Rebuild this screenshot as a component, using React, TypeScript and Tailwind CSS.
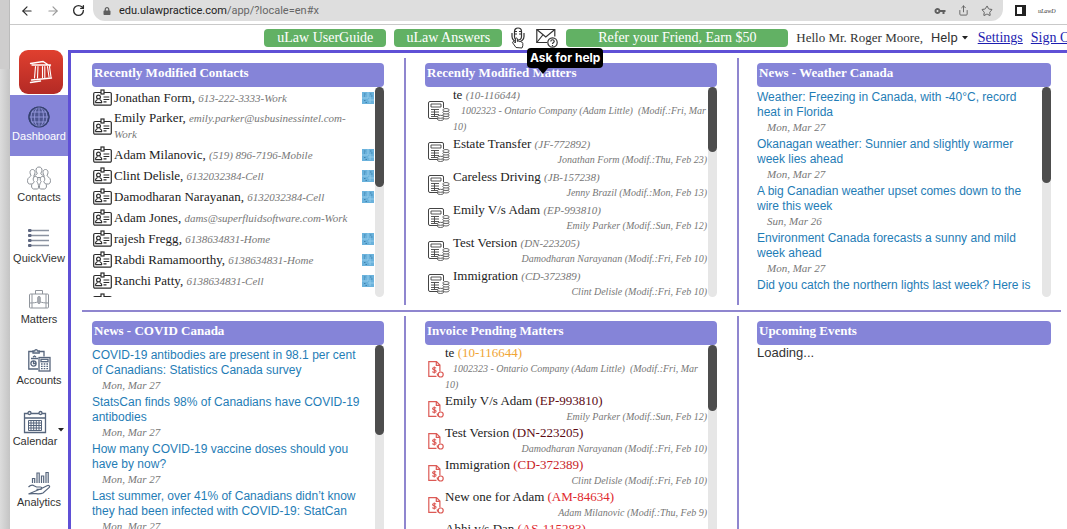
import type { ReactNode } from "react";
import clsx from "clsx";
import { ArrowLeft, ArrowRight, RotateCw, Star, Share } from "lucide-react";
import { FaLock } from "react-icons/fa";
import { MdVpnKey } from "react-icons/md";

const serif = "font-['Liberation_Serif',serif]";

type Contact = { name: string; detail: string; company?: boolean };

const contacts: Contact[] = [
  { name: "Jonathan Form", detail: "613-222-3333-Work", company: true },
  { name: "Emily Parker", detail: "emily.parker@usbusinessintel.com-Work" },
  { name: "Adam Milanovic", detail: "(519) 896-7196-Mobile", company: true },
  { name: "Clint Delisle", detail: "6132032384-Cell", company: true },
  { name: "Damodharan Narayanan", detail: "6132032384-Cell", company: true },
  { name: "Adam Jones", detail: "dams@superfluidsoftware.com-Work" },
  { name: "rajesh Fregg", detail: "6138634831-Home", company: true },
  { name: "Rabdi Ramamoorthy", detail: "6138634831-Home", company: true },
  { name: "Ranchi Patty", detail: "6138634831-Cell", company: true },
];

type Matter = { name: string; code: string; detail: string; long?: boolean; color?: string };

const matters: Matter[] = [
  { name: "te", code: "(10-116644)", detail: "1002323 - Ontario Company (Adam Little) \u00a0(Modif.:Fri, Mar 10)", long: true },
  { name: "Estate Transfer", code: "(JF-772892)", detail: "Jonathan Form (Modif.:Thu, Feb 23)" },
  { name: "Careless Driving", code: "(JB-157238)", detail: "Jenny Brazil (Modif.:Mon, Feb 13)" },
  { name: "Emily V/s Adam", code: "(EP-993810)", detail: "Emily Parker (Modif.:Sun, Feb 12)" },
  { name: "Test Version", code: "(DN-223205)", detail: "Damodharan Narayanan (Modif.:Fri, Feb 10)" },
  { name: "Immigration", code: "(CD-372389)", detail: "Clint Delisle (Modif.:Fri, Feb 10)" },
];

const invoices: Matter[] = [
  { name: "te", code: "(10-116644)", detail: "1002323 - Ontario Company (Adam Little) \u00a0(Modif.:Fri, Mar 10)", long: true, color: "text-[#f0a534]" },
  { name: "Emily V/s Adam", code: "(EP-993810)", detail: "Emily Parker (Modif.:Sun, Feb 12)", color: "text-[#5c0a14]" },
  { name: "Test Version", code: "(DN-223205)", detail: "Damodharan Narayanan (Modif.:Fri, Feb 10)", color: "text-[#5c0a14]" },
  { name: "Immigration", code: "(CD-372389)", detail: "Clint Delisle (Modif.:Fri, Feb 10)", color: "text-[#c81e28]" },
  { name: "New one for Adam", code: "(AM-84634)", detail: "Adam Milanovic (Modif.:Thu, Feb 9)", color: "text-[#e0282e]" },
  { name: "Abhi v/s Dan", code: "(AS-115283)", detail: "Abhi Singh (Modif.:Thu, Feb 9)", color: "text-[#e0282e]" },
];

type News = { title: string; date?: string };

const weatherNews: News[] = [
  { title: "Weather: Freezing in Canada, with -40°C, record heat in Florida", date: "Mon, Mar 27" },
  { title: "Okanagan weather: Sunnier and slightly warmer week lies ahead", date: "Mon, Mar 27" },
  { title: "A big Canadian weather upset comes down to the wire this week", date: "Sun, Mar 26" },
  { title: "Environment Canada forecasts a sunny and mild week ahead", date: "Mon, Mar 27" },
  { title: "Did you catch the northern lights last week? Here is" },
];

const covidNews: News[] = [
  { title: "COVID-19 antibodies are present in 98.1 per cent of Canadians: Statistics Canada survey", date: "Mon, Mar 27" },
  { title: "StatsCan finds 98% of Canadians have COVID-19 antibodies", date: "Mon, Mar 27" },
  { title: "How many COVID-19 vaccine doses should you have by now?", date: "Mon, Mar 27" },
  { title: "Last summer, over 41% of Canadians didn’t know they had been infected with COVID-19: StatCan", date: "Mon, Mar 27" },
];

const GlobeIcon = () => (
  <svg viewBox="0 0 24 24" className="w-6 h-6" fill="none" stroke="#34406f" strokeWidth="1.2">
    <circle cx="12" cy="12" r="10" fill="#4d5590" />
    <g stroke="#8f93d6" strokeWidth="1">
      <path d="M12 2v20M2 12h20M3.6 7h16.8M3.6 17h16.8" />
      <ellipse cx="12" cy="12" rx="4.5" ry="10" />
      <ellipse cx="12" cy="12" rx="8" ry="10" />
    </g>
    <circle cx="12" cy="12" r="10" />
  </svg>
);

const PeopleIcon = () => (
  <svg viewBox="0 0 24 24" className="w-6 h-6" fill="#fff" stroke="#8a8f96" strokeWidth="1">
    <path d="M12 1c-2 0-3 1.400-3 3.200 0 1.300.6 2.300 1.300 3 .2 1.600-3.300 1.500-3.300 4.300h10c0-2.800-3.500-2.700-3.300-4.300.7-.7 1.300-1.700 1.300-3C15 2.400 14 1 12 1z" />
    <path d="M5.500 3.500C3.800 3.500 3 4.800 3 6.400c0 1.300.4 2.200 1 2.800.1 1.700-3.500 2-3.500 5.300 0 2 .8 3.500 2 3.500h6.500c1-2.500-1-4-1.500-5.500-.5-1-.6-2-.5-3.300.6-.6 1-1.500 1-2.800 0-1.600-.8-2.900-2.500-2.900z" />
    <path d="M18.500 3.500c1.700 0 2.500 1.300 2.500 2.900 0 1.300-.4 2.200-1 2.800-.1 1.700 3.500 2 3.500 5.300 0 2-.8 3.500-2 3.500H15c-1-2.500 1-4 1.500-5.500.5-1 .6-2 .5-3.300-.6-.6-1-1.500-1-2.800 0-1.600.8-2.900 2.500-2.900z" />
    <path d="M8.500 10.500c-1.500 0-2.300 1.100-2.300 2.600 0 1.200.4 2 1 2.600.1 1.500-2.700 1.300-2.700 4.300 0 1.500 1 3 2 3h4c1.500 0 1.500-5-.7-7.300.6-.6 1-1.400 1-2.600 0-1.500-.8-2.600-2.300-2.600z" />
    <path d="M15.500 10.500c1.500 0 2.300 1.100 2.300 2.600 0 1.200-.4 2-1 2.600-.1 1.500 2.700 1.300 2.700 4.300 0 1.500-1 3-2 3h-4c-1.500 0-1.500-5 .7-7.300-.6-.6-1-1.400-1-2.600 0-1.500.8-2.600 2.300-2.600z" />
  </svg>
);

const ListIcon = () => (
  <svg viewBox="0 0 24 24" className="w-6 h-6" stroke="#8a92a0" strokeWidth="1.300">
    <path d="M3 3.500h19M3 8.500h19M3 13.500h19M3 18.500h19" />
    <g fill="#5d6680" stroke="none">
      <rect x="1" y="2" width="3.500" height="3" rx="1" />
      <rect x="1" y="7" width="3.500" height="3" rx="1" />
      <rect x="1" y="12" width="3.500" height="3" rx="1" />
      <rect x="1" y="17" width="3.500" height="3" rx="1" />
    </g>
  </svg>
);

const BriefcaseIcon = () => (
  <svg viewBox="0 0 24 24" className="w-6 h-6" fill="none" stroke="#90959c" strokeWidth="1">
    <rect x="2.500" y="6" width="19" height="14" rx="1" />
    <path d="M8.500 6V2.500h7V6M2.500 15c4 0 7-.5 8-1M21.500 15c-4 0-7-.5-8-1M5 6v14M19 6v14" />
    <rect x="10.800" y="8.500" width="2.400" height="7" rx="1" fill="#aeb2b8" />
  </svg>
);

const AccountsIcon = () => (
  <svg viewBox="0 0 24 24" className="w-6 h-6" fill="none" stroke="#56657c" strokeWidth="1.300">
    <path d="M11 20H1.800V2.500h4.400M12 2.500h5v5" />
    <path d="M6 4V2h1.800a1.300 1.300 0 0 1 2.600 0h1.800v2z" />
    <circle cx="6.500" cy="14.500" r="2.600" />
    <path d="M6.500 12v2.500H9M4 9.500h7M6 8l1.500-1L9 8" />
    <rect x="12" y="8.500" width="11" height="13.500" fill="#fff" />
    <rect x="14" y="10.300" width="7" height="2.400" />
    <path d="M14 15h1.600M16.700 15h1.600M19.400 15H21M14 17.300h1.600M16.700 17.300h1.600M19.400 17.300H21M14 19.600h1.600M16.700 19.600h1.600M19.400 19.600H21" />
  </svg>
);

const CalendarIcon = () => (
  <svg viewBox="0 0 24 24" className="w-6 h-6" fill="none" stroke="#56657c" strokeWidth="1.300">
    <path d="M5 3.500H1.500V22.500h21V3.500H19M8 3.500h8M1.500 8h21" />
    <circle cx="6.500" cy="3" r="1.500" />
    <circle cx="17.500" cy="3" r="1.500" />
    <path d="M5.500 10.500h13v10h-13zM5.500 13h13M5.500 15.500h13M5.500 18h13M8 10.500v10M10.700 10.500v10M13.300 10.500v10M16 10.500v10" strokeWidth="1" />
  </svg>
);

const AnalyticsIcon = () => (
  <svg viewBox="0 0 24 24" className="w-6 h-6" fill="none" stroke="#56657c" strokeWidth="1.200">
    <path d="M5.500 12V7.500h2.200V12M10 12V2h2.200v10M14.500 12V5h2.200v7M19 12V1.500h2.200V12" />
    <path d="M1.500 16c2-2 4.500-2 6-1l2 1h4c1.800 0 1.800 2.400 0 2.400H9.500M14.500 17.500l5.500-2.700c2-1 3.500.6 2 1.800L16 22c-3 1.500-7 .5-10 .6L1.500 23z" />
  </svg>
);

const ContactCardIcon = () => (
  <svg viewBox="0 0 19 17" className="w-[19px] h-[17px] shrink-0" fill="none" stroke="#2b2b2b" strokeWidth="1.200">
    <path d="M8 3.500H2A1.300 1.300 0 0 0 .7 4.800v10A1.300 1.300 0 0 0 2 16.200h15a1.300 1.300 0 0 0 1.300-1.400v-10A1.300 1.300 0 0 0 17 3.500h-6" />
    <rect x="8" y="1" width="3" height="4" />
    <circle cx="5.500" cy="8" r="1.900" />
    <path d="M2.300 13.500c.3-2 1.600-2.600 2.300-3M9 13.500c-.3-2-1.600-2.600-2.400-3M2.300 13.700h6.700" />
    <path d="M10.500 8h5.800M10.500 10.500h5.800M10.500 12.800h3" />
  </svg>
);

const CompanyIcon = () => (
  <svg viewBox="0 0 12 12" className="w-3 h-3 shrink-0">
    <rect width="12" height="12" fill="#6ab2dc" />
    <path d="M6 0v6M0 6h6M6 8h6M8 5v6" stroke="#93cbea" strokeWidth="1" />
    <path d="M2 2h1.500M8 2h1.500M2 8.500h1.500M2 4h1M9 4h1.500M3.500 10.500h1.500" stroke="#3f82ae" strokeWidth="1" />
  </svg>
);

const MatterIcon = () => (
  <svg viewBox="0 0 22 20" className="w-[22px] h-5 shrink-0" fill="none" stroke="#444" strokeWidth="1">
    <path d="M12 17.500H2A1.500 1.500 0 0 1 .5 16V2A1.500 1.500 0 0 1 2 .5h12A1.500 1.500 0 0 1 15.500 2v5" />
    <path d="M3 3h10v3H3zM3 8.500h8M3 11h8M3 13.500h8M3 15.500h7M6.500 8.500v7" strokeWidth=".9" />
    <g fill="#fff" strokeWidth=".8">
      <ellipse cx="18" cy="16.500" rx="3.200" ry="1.500" />
      <ellipse cx="18" cy="14" rx="3.200" ry="1.500" />
      <ellipse cx="18" cy="11.500" rx="3.200" ry="1.500" />
      <ellipse cx="18" cy="9" rx="3.200" ry="1.500" />
      <ellipse cx="12.500" cy="18" rx="3.200" ry="1.500" />
      <ellipse cx="12.500" cy="15.800" rx="3.200" ry="1.500" />
    </g>
  </svg>
);

const InvoiceIcon = () => (
  <svg viewBox="0 0 16 17" className="w-4 h-[17px] shrink-0" fill="none" stroke="#dc5a55" strokeWidth="1.200">
    <path d="M8.500 15.400H.8V.7h7.700l3.400 3.400v6.400M8.300.7v3.600h3.600" />
    <path d="M8 7.300C7.500 6.200 4.500 6.200 4.600 7.700c0 1.600 3.500.8 3.500 2.500 0 1.500-3.100 1.500-3.700.2M6.300 5.500v7" strokeWidth="1.100" />
    <circle cx="12.700" cy="13.500" r="2.500" />
    <path d="M9 12.500l1.500 3" />
  </svg>
);

const Caret = ({ className }: { className?: string }) => (
  <svg viewBox="0 0 6 4" className={clsx("w-[6px] h-1", className)} fill="#222">
    <path d="M0 0h6L3 3.500z" />
  </svg>
);

const navItems = [
  { label: "Dashboard", icon: GlobeIcon, active: true },
  { label: "Contacts", icon: PeopleIcon },
  { label: "QuickView", icon: ListIcon },
  { label: "Matters", icon: BriefcaseIcon },
  { label: "Accounts", icon: AccountsIcon },
  { label: "Calendar", icon: CalendarIcon, menu: true },
  { label: "Analytics", icon: AnalyticsIcon },
];

const BrowserBar = () => (
  <div className="flex items-start h-[25px] shrink-0 border-b border-[#c9c9c9] bg-white">
    <div className="flex items-center gap-3 h-[21px] pl-2.5 w-[83px] shrink-0 text-[#2d2d2d]">
      <button aria-label="Back"><ArrowLeft size={14} /></button>
      <button aria-label="Forward"><ArrowRight size={14} className="text-[#9a9a9a]" /></button>
      <button aria-label="Reload"><RotateCw size={13} strokeWidth={2.5} /></button>
    </div>
    <div className="flex flex-1 items-center h-[21px] rounded-b-xl bg-[#dedede] px-2.5 text-[#5f5f5f]">
      <FaLock size={8} className="mr-2" />
      <span className="flex-1 pt-px font-[Roboto,sans-serif] text-[11px] text-[#666]">
        <span className="text-[#222]">edu.ulawpractice.com</span>/app/?locale=en#x
      </span>
      <div className="flex items-center gap-3">
        <MdVpnKey size={12} />
        <Share size={11} />
        <Star size={12} />
      </div>
    </div>
    <div className="flex items-center w-16 h-[21px] pl-3 gap-3 shrink-0">
      <svg viewBox="0 0 11 11" className="w-[11px] h-[11px]">
        <path d="M1 1h9v9H1z" fill="#fff" stroke="#222" strokeWidth="2" />
        <path d="M7 1h3v9H7z" fill="#222" />
      </svg>
      <span className="text-[6px] leading-none italic text-[#333] font-['Liberation_Serif',serif]">uLawD</span>
    </div>
  </div>
);

const Header = () => (
  <header className={clsx("flex items-center justify-end h-[25px] shrink-0 whitespace-nowrap overflow-hidden text-[#333]", serif)}>
    <div className="flex items-center shrink-0 -mr-3.5">
      <button className="w-[122px] h-[18px] rounded-sm bg-[#62b164] text-white text-sm leading-[18px] mr-2">uLaw UserGuide</button>
      <button className="w-[108px] h-[18px] rounded-sm bg-[#62b164] text-white text-sm leading-[18px] mr-2">uLaw Answers</button>
      <button aria-label="Voice" className="mr-2.5">
        <svg viewBox="0 0 16 22" className="w-4 h-[22px]" fill="none" stroke="#333" strokeWidth="1.200">
          <rect x="4.500" y="1" width="7" height="12" rx="3.500" />
          <path d="M4.500 4.500h2.500M4.500 7h2.500M9 4.500h2.500M9 7h2.500M2 6v3.500a6 5.500 0 0 0 12 0V6M8 15v4" />
          <path d="M6 20.500 2.800 16c-.8-1.400.8-2 1.600-1l1 1v-4c0-1.400 2-1.400 2 0v2.500c.5-.9 1.700-.6 1.900.2.6-.6 1.600-.3 1.800.5.8-.4 1.700.2 1.700 1.200v2.400l-.8 2.200z" fill="#fff" strokeWidth="1" />
        </svg>
      </button>
      <button aria-label="Mail" className="mr-2">
        <svg viewBox="0 0 22 20" className="w-[22px] h-5" fill="none" stroke="#333" strokeWidth="1.200">
          <path d="M11 14.500H.8V1.500h18v7" />
          <path d="M.8 1.500l9 7.500 9-7.500M.8 14.500l6-7.500" />
          <circle cx="16.500" cy="14.500" r="4.700" fill="#fff" />
          <path d="M14.800 13.400c0-2.200 3.400-2.200 3.400 0 0 1.100-1.700 1.200-1.700 2.600M16.500 17v1" />
        </svg>
      </button>
      <button className="w-[222px] h-[18px] rounded-sm bg-[#62b164] text-white text-sm leading-[18px] mr-2">
        Refer your Friend, Earn $50
      </button>
      <span className="text-[13px] mr-2">Hello Mr. Roger Moore,</span>
      <button className="flex items-center gap-1 mr-2.5 text-[13px] font-[Roboto,sans-serif]">
        Help <Caret />
      </button>
      <a href="#settings" className="text-sm underline text-[#1d1db0] mr-2">Settings</a>
      <a href="#signout" className="text-sm underline text-[#1d1db0]">Sign Out</a>
    </div>
  </header>
);

const Sidebar = () => (
  <nav className="w-[58px] shrink-0">
    <a href="#home" aria-label="Home" className="block pl-[9px] pb-px">
      <svg viewBox="0 0 44 44" className="w-11 h-11">
        <defs>
          <linearGradient id="logo" x1="0" y1="0" x2="0" y2="1">
            <stop offset="0" stopColor="#e0402f" />
            <stop offset="1" stopColor="#b32a25" />
          </linearGradient>
        </defs>
        <rect width="44" height="44" rx="9" fill="url(#logo)" />
        <g fill="none" stroke="#fff" strokeLinecap="round">
          <path d="M11.500 13.500 24 11.500l7 4.500M13 15h18.500" strokeWidth="1.300" />
          <path d="M16.500 16.500 15.500 28M19 16.500 18.500 28M23.500 16.500v11M25.800 16.500v11M28.500 16.500 30 27M30.500 16.500 32 27" strokeWidth="1.100" />
          <path d="M12.500 30l20-2M11.500 32.500l10-1.500" strokeWidth="1.400" />
        </g>
      </svg>
    </a>
    {navItems.map((item) => (
      <a
        key={item.label}
        href={`#${item.label.toLowerCase()}`}
        className={clsx(
          "relative flex flex-col items-center pt-2.5 pb-[13px] text-[11px] leading-[14px]",
          item.active ? "bg-[#8584d8] text-white" : "text-[#333]",
          item.menu && "pr-2"
        )}
      >
        <item.icon />
        {item.label}
        {item.menu && <Caret className="absolute right-1 top-7" />}
      </a>
    ))}
  </nav>
);

type PanelProps = { title: string; thumb?: string; children: ReactNode };

const Panel = ({ title, thumb, children }: PanelProps) => (
  <section className="pt-[5px] pb-2">
    <h2 className={clsx("h-6 rounded bg-[#8584d8] pl-[2px] text-[13px] leading-5 font-bold text-white", serif)}>{title}</h2>
    <div className="flex h-[210px]">
      <div className="flex-1 min-w-0 overflow-hidden">{children}</div>
      {thumb && (
        <div className="w-[9px] shrink-0 rounded-full bg-[#e6e6e6]">
          <div className={clsx("rounded-full bg-[#4d4d4d]", thumb)} />
        </div>
      )}
    </div>
  </section>
);

const ContactList = () => (
  <ul className={clsx("px-px", serif)}>
    {contacts.map((c) => (
      <li key={c.name} className="flex items-center py-[2px] gap-[2px]">
        <ContactCardIcon />
        <p className="flex-1 text-[13px] leading-4 text-[#222]">
          {c.name}, <i className="text-[11px] text-[#777]">{c.detail}</i>
        </p>
        {c.company ? <CompanyIcon /> : <span className="w-3 shrink-0" />}
      </li>
    ))}
    <li className="py-[2px]"><ContactCardIcon /></li>
  </ul>
);

const MatterList = ({ items, invoice }: { items: Matter[]; invoice?: boolean }) => (
  <ul className={clsx("pl-[3px]", serif)}>
    {items.map((m) => (
      <li key={m.code} className={clsx("flex items-center", invoice ? "gap-px" : "gap-[3px] pb-px")}>
        {invoice ? <InvoiceIcon /> : <MatterIcon />}
        <div className="flex-1">
          <p className="text-[13px] leading-4 text-[#222]">
            {m.name}{" "}
            {invoice ? <span className={m.color}>{m.code}</span> : <i className="text-[11px] text-[#777]">{m.code}</i>}
          </p>
          <p className={clsx("text-[10px] leading-4 italic text-[#777]", m.long ? "indent-2" : "pr-px text-right")}>{m.detail}</p>
        </div>
      </li>
    ))}
  </ul>
);

const NewsList = ({ items }: { items: News[] }) => (
  <ul className="pt-[3px] pr-2">
    {items.map((n) => (
      <li key={n.title} className="pb-[2px]">
        <a href="#news" className="block text-xs leading-[15px] text-[#1f7db6]">{n.title}</a>
        {n.date && <p className={clsx("pl-2.5 text-[11px] leading-[15px] italic text-[#777]", serif)}>{n.date}</p>}
      </li>
    ))}
  </ul>
);

const App = () => {
  const columns = "grid grid-cols-[324fr_333fr_322fr]";

  return (
    <div className="flex h-screen overflow-hidden bg-white font-['Liberation_Sans',sans-serif]">
      <div className="flex flex-col w-2.5 shrink-0">
        <div className="h-[69px] border-r border-[#bbb] bg-[#cecdcd]" />
        <div className="flex-1 bg-linear-to-r from-[#dcdcdc] to-[#c4c4c4]" />
      </div>
      <div className="flex flex-col flex-1 min-w-0">
        <BrowserBar />
        <Header />
        <div className="flex flex-1 min-h-0">
          <Sidebar />
          <main className="flex-1 min-w-0 border-t-3 border-l-3 border-[#5f50d6] pt-[5px] pl-[11px] pr-[6px]">
            <div className={columns}>
              <div className="border-r-2 border-[#8f86cf] pl-2.5 pr-5">
                <Panel title="Recently Modified Contacts" thumb="h-[100px]"><ContactList /></Panel>
              </div>
              <div className="border-r-2 border-[#8f86cf] pl-[19px] pr-5">
                <Panel title="Recently Modified Matters" thumb="h-[65px]"><MatterList items={matters} /></Panel>
              </div>
              <div className="pl-[18px] pr-2.5">
                <Panel title="News - Weather Canada" thumb="h-24"><NewsList items={weatherNews} /></Panel>
              </div>
            </div>
            <hr className="mt-[5px] mb-1 border-t-2 border-[#8f86cf]" />
            <div className={columns}>
              <div className="border-r-2 border-[#8f86cf] pl-2.5 pr-5">
                <Panel title="News - COVID Canada" thumb="h-[90px]"><NewsList items={covidNews} /></Panel>
              </div>
              <div className="border-r-2 border-[#8f86cf] pl-[19px] pr-5">
                <Panel title="Invoice Pending Matters" thumb="h-[66px]"><MatterList items={invoices} invoice /></Panel>
              </div>
              <div className="pl-[18px] pr-2.5">
                <Panel title="Upcoming Events">
                  <p className="text-[13px] leading-4 text-[#333]">Loading...</p>
                </Panel>
              </div>
            </div>
          </main>
        </div>
      </div>
      {/* tooltip of the mail button */}
      <div role="tooltip" className="absolute top-12 left-[527px] rounded-sm bg-black px-[3px] font-[Inter,sans-serif] text-xs leading-5 font-bold text-white">
        Ask for help
        <svg viewBox="0 0 10 6" className="absolute left-[11px] top-5 w-2.5 h-1.5"><path d="M0 0h10L5 6z" /></svg>
      </div>
    </div>
  );
};

export default App;
